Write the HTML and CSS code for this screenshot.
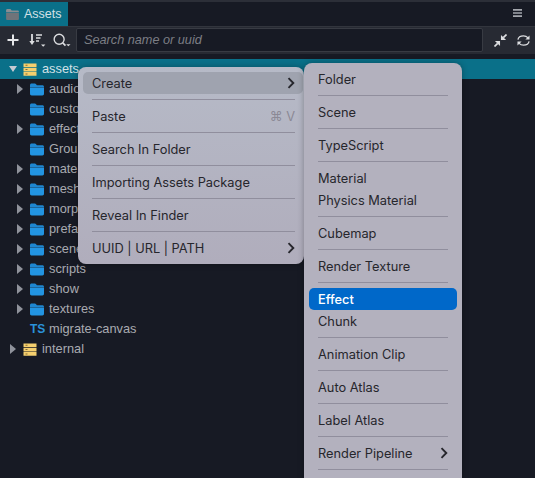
FILE: index.html
```html
<!DOCTYPE html>
<html lang="en">
<head>
    <meta charset="UTF-8">
    <title>Assets</title>
    <link rel="stylesheet" href="styles.css">
</head>
<body>
<svg class="defs" width="0" height="0">
    <symbol id="folder" viewBox="0 0 14 13">
        <path d="M0 2.2C0 1.2.7.5 1.6.5h3.2c.5 0 .8.2 1.1.5l1 1.2H12.400c.9 0 1.600.7 1.600 1.600v.5H0z" fill="#1e86d0"/>
        <path d="M0 4.400h14v6.400c0 1-.7 1.700-1.600 1.700H1.600C.7 12.500 0 11.800 0 10.800z" fill="#2294e2"/>
    </symbol>
    <symbol id="db" viewBox="0 0 13 13">
        <path d="M0 .5h13v3.600H0zM0 4.800h13v3.600H0zM0 9.100h13v3.600H0z" fill="#f5cf6e"/>
        <path d="M2 1.800h2v1H2zM2 6.100h2v1H2zM2 10.400h2v1H2z" fill="#8a6d2c"/>
    </symbol>
    <symbol id="open" viewBox="0 0 8 6"><path d="M0 0h8L4 6z" fill="#c6cad2"/></symbol>
    <symbol id="shut" viewBox="0 0 6 10"><path d="M0 0l6 5-6 5z" fill="#8f929b"/></symbol>
    <symbol id="chev" viewBox="0 0 8 12"><path d="M1.500 1.200L6.300 6l-4.800 4.800" fill="none" stroke="#26262c" stroke-width="1.900"/></symbol>
</svg>

<div class="panel">
    <div class="tabbar">
        <div class="tab">
            <svg class="tab-icon" viewBox="0 0 14 12"><path d="M0 1.500C0 .7.600 0 1.400 0h3.400l1.300 1.500h6.500c.800 0 1.400.6 1.400 1.400V3.500H0z" fill="#8a8d92"/><path d="M0 4h14v6.600c0 .8-.6 1.400-1.400 1.400H1.400C.6 12 0 11.400 0 10.600z" fill="#70747a"/></svg>
            <span>Assets</span>
        </div>
        <svg class="hamburger" viewBox="0 0 8 7"><path d="M0 0h8v1.400H0zM0 2.800h8v1.400H0zM0 5.600h8V7H0z" fill="#a4a7ad"/></svg>
    </div>

    <div class="toolbar">
        <svg class="tool tool-add" viewBox="0 0 12 12"><path d="M6 .5v11M.5 6h11" stroke="#e6e7ea" stroke-width="2"/></svg>
        <svg class="tool tool-sort" viewBox="0 0 17 14"><path d="M3 1v8" stroke="#dcdde0" stroke-width="1.800"/><path d="M.3 8h5.400L3 12z" fill="#dcdde0"/><path d="M7 2h6M7 5h4.500M7 8h3" stroke="#dcdde0" stroke-width="1.600"/><path d="M12 11.500h4.400L14.200 13.800z" fill="#dcdde0"/></svg>
        <svg class="tool tool-find" viewBox="0 0 17 14"><circle cx="5.800" cy="5.800" r="4.700" fill="none" stroke="#dcdde0" stroke-width="1.300"/><path d="M9.200 9.200l2.600 2.600" stroke="#dcdde0" stroke-width="1.600"/><path d="M12.500 10.500h4l-2 2z" fill="#dcdde0"/></svg>
        <div class="search">Search name or uuid</div>
        <svg class="tool tool-fold" viewBox="0 0 14 14"><path d="M13.500.5L10 4M.5 13.500L4 10" stroke="#dcdde0" stroke-width="1.800"/><path d="M7.500 1v5.500H13zM6.500 13V7.500H1z" fill="#dcdde0"/></svg>
        <svg class="tool tool-sync" viewBox="0 0 14 14"><path d="M1 6C1.500 3.400 4 2 7 2c2 0 3.500.7 5 2.200M13 8c-.5 2.600-3 4-6 4-2 0-3.500-.7-5-2.200" fill="none" stroke="#dcdde0" stroke-width="1.400"/><path d="M13.500 1.500v4.500H9zM.5 12.500V8H5z" fill="#dcdde0"/></svg>
    </div>

    <div class="tree">
        <div class="row row-on lvl0"><svg class="arrow"><use href="#open" width="8" height="6" y="2"/></svg><svg class="ico"><use href="#db"/></svg><span>assets</span></div>
        <div class="row lvl1"><svg class="arrow"><use href="#shut"/></svg><svg class="ico"><use href="#folder"/></svg><span>audio</span></div>
        <div class="row lvl1"><i class="arrow"></i><svg class="ico"><use href="#folder"/></svg><span>custom</span></div>
        <div class="row lvl1"><svg class="arrow"><use href="#shut"/></svg><svg class="ico"><use href="#folder"/></svg><span>effects</span></div>
        <div class="row lvl1"><i class="arrow"></i><svg class="ico"><use href="#folder"/></svg><span>Ground</span></div>
        <div class="row lvl1"><svg class="arrow"><use href="#shut"/></svg><svg class="ico"><use href="#folder"/></svg><span>materials</span></div>
        <div class="row lvl1"><svg class="arrow"><use href="#shut"/></svg><svg class="ico"><use href="#folder"/></svg><span>meshes</span></div>
        <div class="row lvl1"><svg class="arrow"><use href="#shut"/></svg><svg class="ico"><use href="#folder"/></svg><span>morph</span></div>
        <div class="row lvl1"><svg class="arrow"><use href="#shut"/></svg><svg class="ico"><use href="#folder"/></svg><span>prefabs</span></div>
        <div class="row lvl1"><svg class="arrow"><use href="#shut"/></svg><svg class="ico"><use href="#folder"/></svg><span>scenes</span></div>
        <div class="row lvl1"><svg class="arrow"><use href="#shut"/></svg><svg class="ico"><use href="#folder"/></svg><span>scripts</span></div>
        <div class="row lvl1"><svg class="arrow"><use href="#shut"/></svg><svg class="ico"><use href="#folder"/></svg><span>show</span></div>
        <div class="row lvl1"><svg class="arrow"><use href="#shut"/></svg><svg class="ico"><use href="#folder"/></svg><span>textures</span></div>
        <div class="row lvl1"><i class="arrow"></i><b class="ts">TS</b><span>migrate-canvas</span></div>
        <div class="row lvl0"><svg class="arrow"><use href="#shut"/></svg><svg class="ico"><use href="#db"/></svg><span>internal</span></div>
    </div>
</div>

<div class="menu menu-main">
    <div class="item item-hover">Create<svg class="chev"><use href="#chev"/></svg></div>
    <hr>
    <div class="item">Paste<span class="key">⌘ V</span></div>
    <hr>
    <div class="item">Search In Folder</div>
    <hr>
    <div class="item">Importing Assets Package</div>
    <hr>
    <div class="item">Reveal In Finder</div>
    <hr>
    <div class="item">UUID | URL | PATH<svg class="chev"><use href="#chev"/></svg></div>
</div>

<div class="menu menu-sub">
    <div class="item">Folder</div>
    <hr>
    <div class="item">Scene</div>
    <hr>
    <div class="item">TypeScript</div>
    <hr>
    <div class="item">Material</div>
    <div class="item">Physics Material</div>
    <hr>
    <div class="item">Cubemap</div>
    <hr>
    <div class="item">Render Texture</div>
    <hr>
    <div class="item item-active">Effect</div>
    <div class="item">Chunk</div>
    <hr>
    <div class="item">Animation Clip</div>
    <hr>
    <div class="item">Auto Atlas</div>
    <hr>
    <div class="item">Label Atlas</div>
    <hr>
    <div class="item">Render Pipeline<svg class="chev"><use href="#chev"/></svg></div>
    <hr>
</div>
</body>
</html>
```

FILE: styles.css
```css
*{ margin: 0; padding: 0; box-sizing: border-box;}
html,body{ height: 100%; overflow: hidden;}
body{ background: #171a24; font: 12px "Liberation Sans", sans-serif; position: relative;}
.defs{ position: absolute;}

.panel{ display: flex; flex-direction: column; height: 100%;}

.tabbar{ height: 26px; padding-right: 13px; display: flex; align-items: flex-start; justify-content: space-between; background: #171a24; border-top: 2px solid #2c2f38;}
.tab{ width: 68px; height: 24px; padding-left: 6px; display: flex; align-items: center; gap: 5px; background: #0a7089; color: #d4e0e6; font: 12.500px "Liberation Sans", sans-serif;}
.tab-icon{ width: 13px; height: 11px;}
.hamburger{ width: 9px; height: 8px; margin-top: 7px;}

.toolbar{ height: 28px; padding: 0 5px 1px 7px; display: flex; align-items: center; background: #272a33; border-top: 1px solid #32353d;}
.tool{ flex: none;}
.tool-add{ width: 12px; height: 12px;}
.tool-sort{ width: 17px; height: 14px; margin-left: 10px;}
.tool-find{ width: 18px; height: 15px; margin-left: 7px;}
.tool-fold{ width: 13px; height: 13px; margin-left: 11px;}
.tool-sync{ width: 13px; height: 13px; margin-left: 10px;}
.search{ flex: 1; height: 24px; margin-left: 5px; padding-left: 7px; background: #171a24; border: 1px solid #383b43; border-radius: 2px; color: #7c7e84; font: italic 12.700px/22px "Liberation Sans", sans-serif;}

.tree{ padding-top: 5px;}
.row{ height: 20px; display: flex; align-items: center; color: #a9abb1; font: 12.800px/20px "Liberation Sans", sans-serif;}
.row span{ margin-left: 5px; white-space: nowrap;}
.lvl0{ padding-left: 9px;}
.lvl1{ padding-left: 16px;}
.row-on{ background: #0a7089; color: #d3e2e8;}
.arrow{ display: block; width: 8px; height: 10px; margin-right: 6px; flex: none;}
.ico{ width: 14px; height: 13px; flex: none;}
.ts{ width: 14px; font: bold 12px "Liberation Sans", sans-serif; color: #2a92d8; text-align: center;}

.menu{ position: absolute; padding: 5px; border-radius: 8px; color: #26262c; font: 12.800px "Inter", sans-serif; box-shadow: 0 0 6px rgba(0,0,0,.3);}
.menu-main{ left: 78px; top: 67px; width: 226px; padding-right: 1px; background: linear-gradient(#b6bac7, #b0adbc);}
.menu-sub{ left: 304px; top: 63px; width: 158px; height: 430px; background: #b3b1be;}
.menu hr{ height: 1px; margin: 5px 9px; border: 0; background: #908e9d;}
.menu-main hr{ margin-right: 8px;}
.item{ height: 22px; padding: 0 9px; display: flex; align-items: center; justify-content: space-between; border-radius: 5px; white-space: nowrap;}
.menu-main .item{ padding-right: 8px;}
.item-hover{ background: #9fa3af;}
.item-active{ background: #0068c9; color: #fff; font-weight: 500;}
.key{ color: #8b8995;}
.chev{ width: 8px; height: 12px;}
```
